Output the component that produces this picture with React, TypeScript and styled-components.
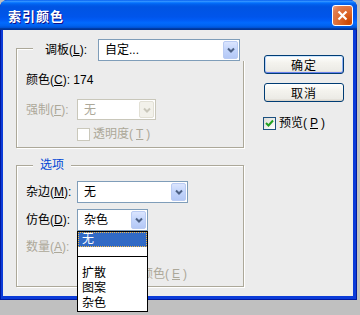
import * as React from 'react'
import styled, { createGlobalStyle, css } from 'styled-components'

const GlobalStyle = createGlobalStyle`
  html, body {
    margin: 0;
    padding: 0;
    background: #c0c0c0;
  }
  body {
    font-family: 'Liberation Sans', 'Noto Sans CJK SC', sans-serif;
    font-size: 12px;
    color: #000;
  }
  #root {
    min-height: 315px;
  }
`

const Window = styled.div`
  width: 357px;
  height: 300px;
  display: flex;
  flex-direction: column;
  background: #0b3bd8;
  border-radius: 8px 8px 0 0;
  box-shadow: inset 0 0 0 1px #0019a0;
`

const TitleBar = styled.div`
  height: 30px;
  flex: none;
  display: flex;
  align-items: center;
  justify-content: space-between;
  padding: 0 4px 0 8px;
  border-radius: 7px 7px 0 0;
  background: linear-gradient(
    180deg,
    #0058ee 0%,
    #3593ff 4%,
    #288eff 6%,
    #127dff 8%,
    #036ffc 10%,
    #0262ee 14%,
    #0057e5 20%,
    #0054e3 24%,
    #0055eb 56%,
    #005bf5 66%,
    #026afe 76%,
    #0062ef 86%,
    #0052d6 92%,
    #0040ab 94%,
    #003092 100%
  );
`

const Title = styled.span`
  color: #fff;
  font-weight: bold;
  font-size: 13px;
  letter-spacing: 1px;
  text-shadow: 1px 1px 0 #0f1089;
`

const CloseButton = styled.div`
  width: 21px;
  height: 21px;
  box-sizing: border-box;
  border: 1px solid #fff;
  border-radius: 3px;
  background: radial-gradient(circle at 85% 85%, #cc4600 0%, #dc6527 40%, #e27e52 80%, #f0a588 100%);
  display: flex;
  align-items: center;
  justify-content: center;
`

const Client = styled.div`
  flex: 1;
  margin: 0 4px 4px 3px;
  background: #ececec;
  display: flex;
  gap: 20px;
  padding: 5px 0 0 13px;
`

const LeftColumn = styled.div`
  width: 228px;
  display: flex;
  flex-direction: column;
`

const Group = styled.fieldset<{ $top?: number; $bottom: number }>`
  margin: ${p => p.$top || 0}px 0 0 0;
  padding: 0 0 ${p => p.$bottom}px 9px;
  min-inline-size: 0;
  width: 228px;
  box-sizing: border-box;
  border: 1px solid #aca899;
  box-shadow: inset 1px 1px 0 #fff, 1px 1px 0 #fff;
`

const Legend = styled.legend<{ $pad: string }>`
  margin-left: 7px;
  padding: ${p => p.$pad};
  background: #ececec;
  line-height: 14px;
  color: #0046d5;
`

const Row = styled.div<{ $mt: number }>`
  display: flex;
  align-items: center;
  margin-top: ${p => p.$mt}px;
  line-height: 16px;
  color: #000;
`

const Label = styled.span<{ $w?: number; $disabled?: boolean }>`
  width: ${p => (p.$w ? `${p.$w}px` : 'auto')};
  flex: none;
  white-space: nowrap;
  color: ${p => (p.$disabled ? '#aca899' : '#000')};
`

const ComboWrap = styled.div`
  position: relative;
`

const Combo = styled.div<{ $w: number; $h: number; $disabled?: boolean }>`
  width: ${p => p.$w}px;
  height: ${p => p.$h}px;
  box-sizing: border-box;
  display: flex;
  align-items: stretch;
  border: 1px solid ${p => (p.$disabled ? '#c9c7ba' : '#7f9db9')};
  background: #fff;
  color: ${p => (p.$disabled ? '#aca899' : '#000')};
`

const ComboValue = styled.span`
  flex: 1;
  display: flex;
  align-items: center;
  padding-left: 6px;
  white-space: nowrap;
`

const DropButton = styled.span<{ $disabled?: boolean }>`
  width: 15px;
  margin: 1px 1px 1px 0;
  box-sizing: border-box;
  border-radius: 2px;
  display: flex;
  align-items: center;
  justify-content: center;
  ${p =>
    p.$disabled
      ? css`
          background: #f2f1ea;
          border: 1px solid #e2e0d5;
        `
      : css`
          background: linear-gradient(180deg, #dbe5fe 0%, #c2d4fb 50%, #b4c8f6 100%);
          border: 1px solid #b9cbf3;
        `}
`

const DropList = styled.div`
  position: absolute;
  top: 100%;
  left: 0;
  width: 100%;
  box-sizing: border-box;
  border: 1px solid #000;
  background: #fff;
  z-index: 5;
`

const ListItem = styled.div<{ $selected?: boolean }>`
  height: 15px;
  line-height: 15px;
  padding-left: 4px;
  box-sizing: border-box;
  ${p =>
    p.$selected &&
    css`
      background: #316ac5;
      color: #fff;
      outline: 1px dotted #f2b94a;
      outline-offset: -1px;
    `}
`

const ListSeparator = styled.div`
  height: 19px;
  display: flex;
  align-items: center;
  &::after {
    content: '';
    display: block;
    width: 100%;
    height: 1px;
    background: #000;
  }
`

const CheckRow = styled.label<{ $mt: number; $ml?: number; $disabled?: boolean }>`
  display: flex;
  align-items: center;
  gap: 3px;
  margin-top: ${p => p.$mt}px;
  margin-left: ${p => p.$ml || 0}px;
  line-height: 16px;
  color: ${p => (p.$disabled ? '#aca899' : '#000')};
  white-space: nowrap;
`

const CheckBox = styled.span<{ $disabled?: boolean }>`
  width: 13px;
  height: 13px;
  box-sizing: border-box;
  flex: none;
  display: flex;
  align-items: center;
  justify-content: center;
  border: 1px solid ${p => (p.$disabled ? '#cac8bb' : '#1c5180')};
  background: ${p => (p.$disabled ? '#fff' : 'linear-gradient(135deg, #dcdcd7 0%, #fff 100%)')};
`

const RightColumn = styled.div`
  display: flex;
  flex-direction: column;
  padding-top: 20px;
`

const Button = styled.div<{ $default?: boolean; $mt?: number }>`
  width: 80px;
  height: 19px;
  box-sizing: border-box;
  margin-top: ${p => p.$mt || 0}px;
  border: 1px solid #003c74;
  border-radius: 3px;
  background: linear-gradient(180deg, #fff 0%, #f4f3ee 40%, #ecebe6 86%, #d6d0c5 100%);
  display: flex;
  align-items: center;
  justify-content: center;
  letter-spacing: 1px;
  ${p =>
    p.$default &&
    css`
      box-shadow: inset 0 1px 0 #cee7ff, inset 0 -1px 0 #6982ee, inset 1px 0 0 #b8d0f8, inset -1px 0 0 #8fb0f5;
    `}
`

const Chevron = ({ disabled }: { disabled?: boolean }) => (
  <svg width='8' height='6' viewBox='0 0 8 6'>
    <path d='M1 1.5 L4 4.5 L7 1.5' fill='none' stroke={disabled ? '#c9c7ba' : '#4d6185'} strokeWidth='2' />
  </svg>
)

const Tick = () => (
  <svg width='9' height='9' viewBox='0 0 9 9'>
    <path d='M1 4 L3.5 6.5 L8 1.5' fill='none' stroke='#21a121' strokeWidth='2' />
  </svg>
)

const DropCombo = ({
  value,
  w,
  h,
  disabled
}: {
  value: string
  w: number
  h: number
  disabled?: boolean
}) => (
  <Combo $w={w} $h={h} $disabled={disabled}>
    <ComboValue>{value}</ComboValue>
    <DropButton $disabled={disabled}>
      <Chevron disabled={disabled} />
    </DropButton>
  </Combo>
)

const ditherOptions = ['扩散', '图案', '杂色']

export default function App() {
  return (
    <>
      <GlobalStyle />
      <Window>
        <TitleBar>
          <Title>索引颜色</Title>
          <CloseButton>
            <svg width='11' height='11' viewBox='0 0 11 11'>
              <path d='M1.5 1.5 L9.5 9.5 M9.5 1.5 L1.5 9.5' stroke='#fff' strokeWidth='2.2' />
            </svg>
          </CloseButton>
        </TitleBar>
        <Client>
          <LeftColumn>
            <Group $bottom={5}>
              <Legend $pad='4px 6px 0 12px'>
                <Row $mt={0}>
                  <Label $w={53}>
                    调板(<u>L</u>):
                  </Label>
                  <DropCombo value='自定...' w={142} h={22} />
                </Row>
              </Legend>
              <Row $mt={11}>
                <Label>
                  颜色(<u>C</u>): 174
                </Label>
              </Row>
              <Row $mt={11}>
                <Label $w={51} $disabled>
                  强制(<u>F</u>):
                </Label>
                <DropCombo value='无' w={79} h={21} disabled />
              </Row>
              <CheckRow $mt={6} $ml={51} $disabled>
                <CheckBox $disabled />
                透明度(<u>T</u>)
              </CheckRow>
            </Group>

            <Group $top={10} $bottom={4}>
              <Legend $pad='0 7px'>选项</Legend>
              <Row $mt={9}>
                <Label $w={51}>
                  杂边(<u>M</u>):
                </Label>
                <DropCombo value='无' w={111} h={22} />
              </Row>
              <Row $mt={6}>
                <Label $w={51}>
                  仿色(<u>D</u>):
                </Label>
                <ComboWrap>
                  <DropCombo value='杂色' w={71} h={22} />
                  <DropList>
                    <ListItem $selected>无</ListItem>
                    <ListSeparator />
                    {ditherOptions.map(o => (
                      <ListItem key={o}>{o}</ListItem>
                    ))}
                  </DropList>
                </ComboWrap>
              </Row>
              <Row $mt={8}>
                <Label $disabled>
                  数量(<u>A</u>):
                </Label>
              </Row>
              <CheckRow $mt={11} $ml={51} $disabled>
                <CheckBox $disabled />
                保留实际颜色(<u>E</u>)
              </CheckRow>
            </Group>
          </LeftColumn>

          <RightColumn>
            <Button $default>确定</Button>
            <Button $mt={9}>取消</Button>
            <CheckRow $mt={13} style={{ marginLeft: -1 }}>
              <CheckBox>
                <Tick />
              </CheckBox>
              预览(<u>P</u>)
            </CheckRow>
          </RightColumn>
        </Client>
      </Window>
    </>
  )
}
